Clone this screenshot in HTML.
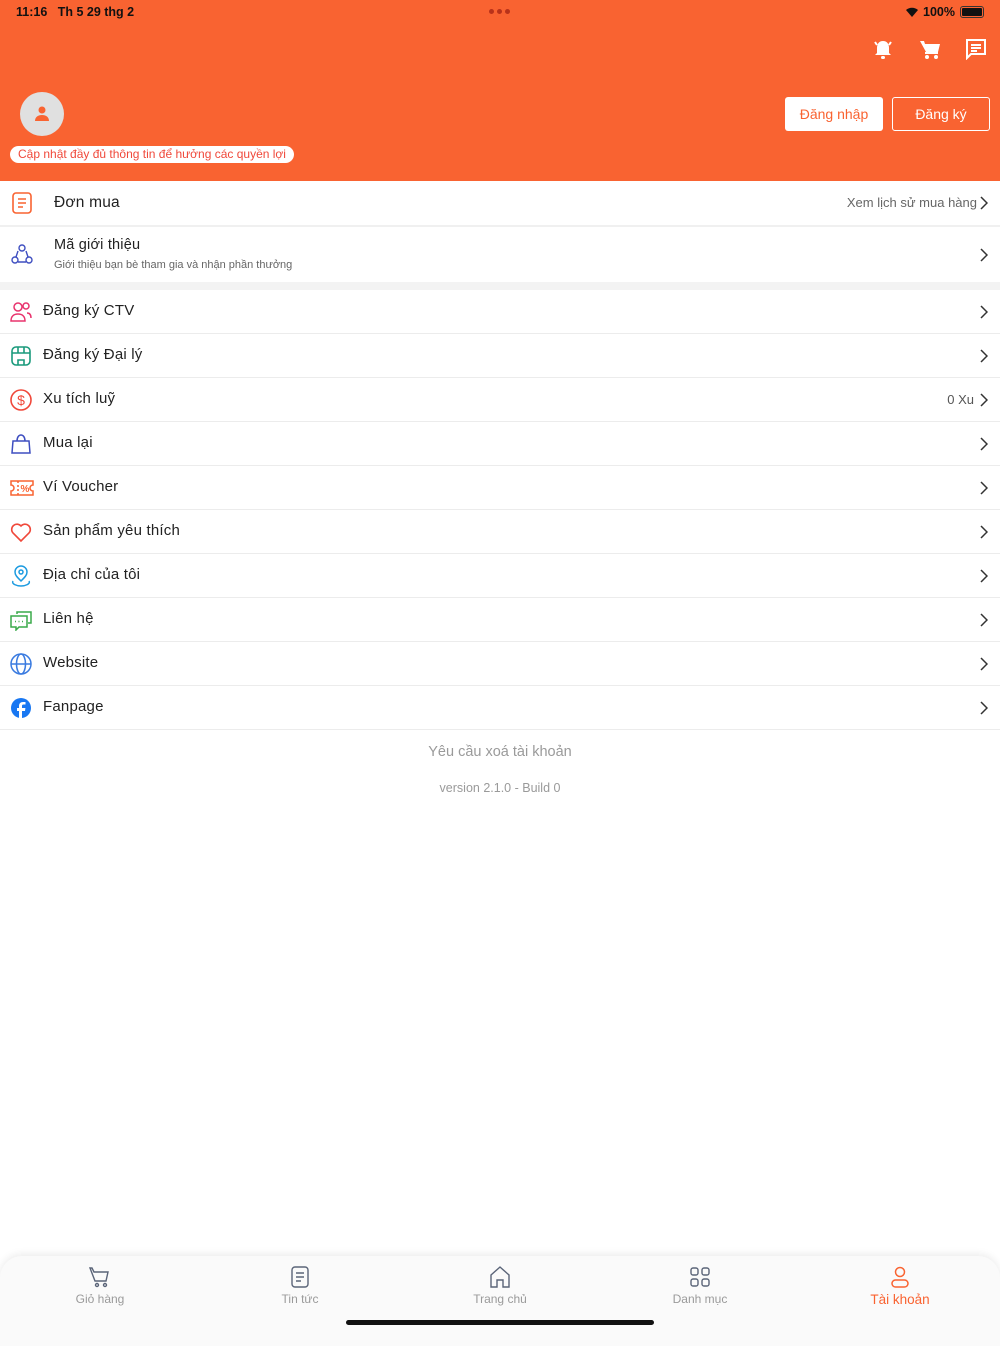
<!DOCTYPE html><html><head><meta charset="utf-8"><style>
*{margin:0;padding:0;box-sizing:border-box}
body{width:1000px;height:1334px;background:#fff;font-family:"Liberation Sans",sans-serif;position:relative;overflow:hidden;color:#222}
.hdr{position:absolute;left:0;top:0;width:1000px;height:181px;background:#f96331}
.abs{position:absolute}
.row{position:absolute;left:0;width:1000px;height:44px;border-bottom:1px solid #ececec;background:#fff}
.row .t{position:absolute;left:43px;top:12px;font-size:15px;color:#222;letter-spacing:.2px}
.row svg.i{position:absolute;left:10px;top:11px}
.chev{position:absolute;right:12px;top:50%;margin-top:-7px}
.tab{position:absolute;top:1266px;width:200px;text-align:center;font-size:12px;color:#9a9a9a}
.tab svg{display:block;margin:0 auto 4px}
</style></head><body>
<div class="hdr"></div>
<div class="abs" style="left:16px;top:5px;font-size:12.5px;font-weight:bold;color:#111">11:16&nbsp;&nbsp; Th 5 29 thg 2</div>
<div class="abs" style="left:489px;top:9px;width:22px;height:6px">
<span class="abs" style="left:0;width:5px;height:5px;border-radius:3px;background:#b8321a"></span><span class="abs" style="left:8px;width:5px;height:5px;border-radius:3px;background:#b8321a"></span><span class="abs" style="left:16px;width:5px;height:5px;border-radius:3px;background:#b8321a"></span></div>
<svg class="abs" style="left:905px;top:6px" width="14" height="12" viewBox="0 0 14 12"><path d="M7 11 L1 4 A9 9 0 0 1 13 4 Z" fill="#111"/></svg>
<div class="abs" style="left:923px;top:5px;font-size:12.5px;font-weight:bold;color:#111">100%</div>
<div class="abs" style="left:960px;top:6px;width:24px;height:12px;border:1.5px solid #333;border-radius:3px;padding:1px"><div style="width:100%;height:100%;background:#111;border-radius:1px"></div></div>
<!-- header icons -->
<svg class="abs" style="left:872px;top:38px" width="22" height="22" viewBox="0 0 22 22" fill="#fff"><path d="M11 3c-4 0-6 3-6 7v5l-2 2h16l-2-2v-5c0-4-2-7-6-7z"/><rect x="9" y="18" width="4" height="3" rx="1.5"/><path d="M3 4l2 3M19 4l-2 3" stroke="#fff" stroke-width="2"/></svg>
<svg class="abs" style="left:919px;top:39px" width="22" height="22" viewBox="0 0 22 22" fill="#fff"><path d="M1 2h4l1 3h15l-2 8H7z" /><rect x="6" y="13" width="13" height="2"/><circle cx="8" cy="18" r="2"/><circle cx="17" cy="18" r="2"/></svg>
<svg class="abs" style="left:965px;top:38px" width="22" height="22" viewBox="0 0 22 22"><path d="M2 2h18v14H6l-4 4z" fill="none" stroke="#fff" stroke-width="2"/><path d="M6 7h10M6 10h10M6 13h6" stroke="#fff" stroke-width="2"/></svg>
<div class="abs" style="left:20px;top:92px;width:44px;height:44px;border-radius:50%;background:#e0e0e0"></div>
<svg class="abs" style="left:32px;top:104px" width="20" height="20" viewBox="0 0 20 20" fill="#f96331"><circle cx="10" cy="6" r="3.5"/><path d="M3 17c0-4 3-6 7-6s7 2 7 6z"/></svg>
<div class="abs" style="left:10px;top:146px;height:17px;padding:0 8px;background:#fff;border-radius:9px;font-size:12px;line-height:17px;color:#f0483a">Cập nhật đầy đủ thông tin để hưởng các quyền lợi</div>
<div class="abs" style="left:785px;top:97px;width:98px;height:34px;background:#fff;border-radius:3px;color:#f96331;font-size:14px;text-align:center;line-height:34px">Đăng nhập</div>
<div class="abs" style="left:892px;top:97px;width:98px;height:34px;border:1px solid #fff;border-radius:3px;color:#fff;font-size:14px;text-align:center;line-height:32px">Đăng ký</div>
<!-- Don mua -->
<div class="row" style="top:181px;height:46px;border-bottom:2px solid #f0f0f0">
<svg class="i" style="left:12px;top:11px" width="20" height="22" viewBox="0 0 20 22"><rect x="1" y="1" width="18" height="20" rx="3" fill="none" stroke="#f96331" stroke-width="1.6"/><path d="M6 7h8M6 11h8M6 15h5" stroke="#f96331" stroke-width="1.6"/></svg>
<div class="t" style="left:54px;top:13px;font-size:15.5px">Đơn mua</div>
<div class="abs" style="right:23px;top:14px;font-size:13px;color:#666">Xem lịch sử mua hàng</div>
<svg class="chev" width="8" height="14" viewBox="0 0 8 14"><path d="M1 1l6 6-6 6" fill="none" stroke="#333" stroke-width="1.5"/></svg></div>
<div class="row" style="top:227px;height:55px;border:none">
<svg class="i" style="left:11px;top:16px" width="22" height="22" viewBox="0 0 22 22" fill="none" stroke="#3e4ec0" stroke-width="1.4"><circle cx="11" cy="5" r="3"/><circle cx="4" cy="17" r="3"/><circle cx="18" cy="17" r="3"/><path d="M7 8l-2 6M15 8l2 6M7 19h8"/></svg>
<div class="t" style="left:54px;top:10px;font-size:14.5px">Mã giới thiệu</div>
<div class="abs" style="left:54px;top:32px;font-size:11px;color:#666">Giới thiệu bạn bè tham gia và nhận phần thưởng</div>
<svg class="chev" width="8" height="14" viewBox="0 0 8 14"><path d="M1 1l6 6-6 6" fill="none" stroke="#333" stroke-width="1.5"/></svg></div>
<div class="abs" style="top:282px;left:0;width:1000px;height:8px;background:#f3f3f3"></div>

<div class="row" style="top:290px"><svg class="i" width="22" height="22" viewBox="0 0 22 22" fill="none" stroke="#e8336d" stroke-width="1.5"><circle cx="8" cy="6" r="4"/><path d="M1 20c0-5 3-7 7-7s7 2 7 7z"/><circle cx="16" cy="5" r="3"/><path d="M17 12c3 0 4 2 4 5"/></svg><div class="t">Đăng ký CTV</div><svg class="chev" width="8" height="14" viewBox="0 0 8 14"><path d="M1 1l6 6-6 6" fill="none" stroke="#333" stroke-width="1.5"/></svg></div>
<div class="row" style="top:334px"><svg class="i" width="22" height="22" viewBox="0 0 22 22" fill="none" stroke="#1a9a7c" stroke-width="1.6"><rect x="2" y="2" width="18" height="18" rx="4"/><path d="M2 8h18M8 2v6M14 2v6M8 20v-5h6v5"/></svg><div class="t">Đăng ký Đại lý</div><svg class="chev" width="8" height="14" viewBox="0 0 8 14"><path d="M1 1l6 6-6 6" fill="none" stroke="#333" stroke-width="1.5"/></svg></div>
<div class="row" style="top:378px"><svg class="i" width="22" height="22" viewBox="0 0 22 22"><circle cx="11" cy="11" r="10" fill="none" stroke="#f0483a" stroke-width="1.6"/><text x="11" y="16" text-anchor="middle" font-size="14" fill="#f0483a" font-family="Liberation Sans">$</text></svg><div class="t">Xu tích luỹ</div><div class="abs" style="right:26px;top:14px;font-size:13px;color:#555">0 Xu</div><svg class="chev" width="8" height="14" viewBox="0 0 8 14"><path d="M1 1l6 6-6 6" fill="none" stroke="#333" stroke-width="1.5"/></svg></div>
<div class="row" style="top:422px"><svg class="i" width="22" height="22" viewBox="0 0 22 22" fill="none" stroke="#3e4ec0" stroke-width="1.5"><path d="M3 8h16l1 12H2z"/><path d="M7 8c0-4 2-6 4-6s4 2 4 6"/></svg><div class="t">Mua lại</div><svg class="chev" width="8" height="14" viewBox="0 0 8 14"><path d="M1 1l6 6-6 6" fill="none" stroke="#333" stroke-width="1.5"/></svg></div>
<div class="row" style="top:466px"><svg class="i" width="24" height="22" viewBox="0 0 24 22" fill="none" stroke="#f96331" stroke-width="1.5"><path d="M1 4h22v4a3 3 0 0 0 0 6v4H1v-4a3 3 0 0 0 0-6z"/><path d="M8 4v14" stroke-dasharray="2 2"/><text x="15" y="15" text-anchor="middle" font-size="10" fill="#f96331" stroke="none" font-weight="bold" font-family="Liberation Sans">%</text></svg><div class="t">Ví Voucher</div><svg class="chev" width="8" height="14" viewBox="0 0 8 14"><path d="M1 1l6 6-6 6" fill="none" stroke="#333" stroke-width="1.5"/></svg></div>
<div class="row" style="top:510px"><svg class="i" width="22" height="22" viewBox="0 0 22 22" fill="none" stroke="#f0483a" stroke-width="1.6"><path d="M11 20L3 12a5 5 0 0 1 8-7 5 5 0 0 1 8 7z"/></svg><div class="t">Sản phẩm yêu thích</div><svg class="chev" width="8" height="14" viewBox="0 0 8 14"><path d="M1 1l6 6-6 6" fill="none" stroke="#333" stroke-width="1.5"/></svg></div>
<div class="row" style="top:554px"><svg class="i" width="22" height="22" viewBox="0 0 22 22" fill="none" stroke="#1d9be0" stroke-width="1.5"><path d="M11 16c-4-4-6-6-6-9a6 6 0 0 1 12 0c0 3-2 5-6 9z"/><circle cx="11" cy="7" r="2"/><path d="M3 16c-2 3 4 5 8 5s10-2 8-5"/></svg><div class="t">Địa chỉ của tôi</div><svg class="chev" width="8" height="14" viewBox="0 0 8 14"><path d="M1 1l6 6-6 6" fill="none" stroke="#333" stroke-width="1.5"/></svg></div>
<div class="row" style="top:598px"><svg class="i" width="22" height="22" viewBox="0 0 22 22" fill="none" stroke="#3aaa4a" stroke-width="1.5"><path d="M7 5V3h14v11h-3"/><path d="M1 7h16v11H9l-3 3v-3H1z"/><path d="M5 12.5h1M8.5 12.5h1M12 12.5h1"/></svg><div class="t">Liên hệ</div><svg class="chev" width="8" height="14" viewBox="0 0 8 14"><path d="M1 1l6 6-6 6" fill="none" stroke="#333" stroke-width="1.5"/></svg></div>
<div class="row" style="top:642px"><svg class="i" width="22" height="22" viewBox="0 0 22 22" fill="none" stroke="#3a7be0" stroke-width="1.5"><circle cx="11" cy="11" r="10"/><ellipse cx="11" cy="11" rx="4.5" ry="10"/><path d="M1 11h20"/></svg><div class="t">Website</div><svg class="chev" width="8" height="14" viewBox="0 0 8 14"><path d="M1 1l6 6-6 6" fill="none" stroke="#333" stroke-width="1.5"/></svg></div>
<div class="row" style="top:686px"><svg class="i" width="22" height="22" viewBox="0 0 22 22"><circle cx="11" cy="11" r="10" fill="#1877f2"/><path d="M12 21v-7h3l.4-3H12V9c0-1 .4-1.5 1.5-1.5h2V5h-2.5C10.5 5 9 6.5 9 9v2H7v3h2v7z" fill="#fff"/></svg><div class="t">Fanpage</div><svg class="chev" width="8" height="14" viewBox="0 0 8 14"><path d="M1 1l6 6-6 6" fill="none" stroke="#333" stroke-width="1.5"/></svg></div>

<div class="abs" style="left:0;width:1000px;top:744px;text-align:center;font-size:14.5px;color:#9a9a9a">Yêu cầu xoá tài khoản</div>
<div class="abs" style="left:0;width:1000px;top:781px;text-align:center;font-size:12.5px;color:#9a9a9a">version 2.1.0 - Build 0</div>

<div class="abs" style="left:0;top:1256px;width:1000px;height:90px;background:#fafafa;border-radius:22px 22px 0 0;box-shadow:0 -2px 8px rgba(0,0,0,.08)"></div>
<div class="tab" style="left:0"><svg width="22" height="22" viewBox="0 0 22 22" fill="none" stroke="#5a6478" stroke-width="1.4"><path d="M1 2h2l2 4h14l-2 9H6z"/><circle cx="8" cy="19" r="1.5"/><circle cx="16" cy="19" r="1.5"/></svg>Giỏ hàng</div>
<div class="tab" style="left:200px"><svg width="22" height="22" viewBox="0 0 22 22" fill="none" stroke="#5a6478" stroke-width="1.4"><rect x="3" y="1" width="16" height="20" rx="3"/><path d="M7 7h8M7 11h8M7 15h5"/></svg>Tin tức</div>
<div class="tab" style="left:400px"><svg width="22" height="22" viewBox="0 0 22 22" fill="none" stroke="#5a6478" stroke-width="1.4"><path d="M2 9L11 1l9 8v12h-6v-7H8v7H2z"/></svg>Trang chủ</div>
<div class="tab" style="left:600px"><svg width="22" height="22" viewBox="0 0 22 22" fill="none" stroke="#5a6478" stroke-width="1.4"><rect x="2" y="2" width="7" height="7" rx="2"/><rect x="13" y="2" width="7" height="7" rx="2"/><rect x="2" y="13" width="7" height="7" rx="2"/><rect x="13" y="13" width="7" height="7" rx="2"/></svg>Danh mục</div>
<div class="tab" style="left:800px;color:#f96331;font-size:13.5px"><svg width="22" height="22" viewBox="0 0 22 22" fill="none" stroke="#f96331" stroke-width="1.5"><circle cx="11" cy="6" r="4.5"/><rect x="3" y="14" width="16" height="7" rx="3.5"/></svg>Tài khoản</div>
<div class="abs" style="left:346px;top:1320px;width:308px;height:5px;border-radius:3px;background:#111"></div>
</body></html>
